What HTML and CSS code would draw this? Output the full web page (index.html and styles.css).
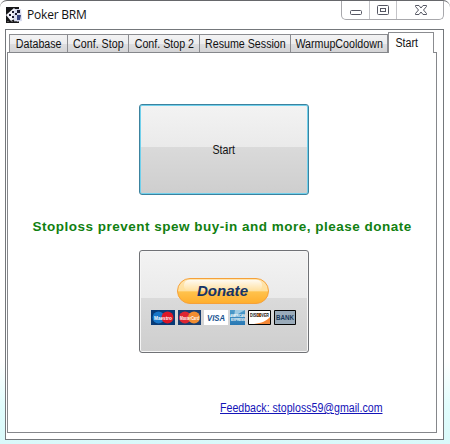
FILE: index.html
```html
<!DOCTYPE html>
<html lang="en">
<head>
<meta charset="utf-8">
<title>Poker BRM</title>
<link rel="stylesheet" href="styles.css">
</head>
<body>
<div class="window">
  <header class="titlebar">
    <svg class="app-icon" width="17" height="16" viewBox="0 0 17 16">
      <path fill="#171719" d="M0 0h13v16H0z"/>
      <path fill="#f2f2f8" d="M0 8 8 1l3 3-3 8-3 2z"/>
      <path fill="#d8dcef" d="M9 2h6l1 12-7 1-3-5z"/>
      <path fill="#1b1b32" d="M3 7h2v2H3zM6 4h2v2H6zM6 9h2v2H6zM9 6h2v2H9zM11 3h3v3h-3z"/>
      <path fill="#36427f" d="M11 8h4l-1 5h-3z"/>
      <path fill="#555" d="M1 14h2v1H1zM5 14h2v1H5zM9 14h2v1H9z"/>
    </svg>
    <h1 class="title">Poker BRM</h1>
    <div class="controls">
      <span class="control"><svg width="27" height="18"><rect x="8.500" y="9.500" width="11" height="4" rx="1" fill="#fff" stroke="#555763"/></svg></span>
      <span class="control"><svg width="26" height="18"><rect x="7.500" y="4.500" width="11" height="9" rx="1" fill="#fff" stroke="#555763"/><rect x="10.500" y="7.500" width="5" height="3" fill="#fff" stroke="#555763"/></svg></span>
      <span class="control"><svg width="46" height="18"><path d="M18.500 4.500h3.500l2 2.500 2-2.500h3.500v1l-3 3.500 3 3.500v1H26l-2-2.500-2 2.500h-3.500v-1l3-3.500-3-3.500z" fill="#fff" stroke="#555763"/></svg></span>
    </div>
  </header>
  <main class="client">
    <nav class="tabs">
      <span class="tab tab-database"><span class="label">Database</span></span>
      <span class="tab tab-stop"><span class="label">Conf. Stop</span></span>
      <span class="tab tab-stop2"><span class="label">Conf. Stop 2</span></span>
      <span class="tab tab-resume"><span class="label">Resume Session</span></span>
      <span class="tab tab-warmup"><span class="label">WarmupCooldown</span></span>
      <span class="tab tab-start"><span class="label">Start</span></span>
    </nav>
    <section class="panel">
      <button class="button start"><span class="label">Start</span></button>
      <p class="message">Stoploss prevent spew buy-in and more, please donate</p>
      <button class="button donate" aria-label="Donate">
        <svg width="148" height="50" viewBox="0 0 148 50">
          <defs>
            <linearGradient id="gold" x2="0" y2="1"><stop offset="0" stop-color="#ffe5b0"/><stop offset=".48" stop-color="#ffe09d"/><stop offset=".54" stop-color="#ffc24c"/><stop offset="1" stop-color="#ffae2c"/></linearGradient>
            <linearGradient id="shine" x2="0" y2="1"><stop offset="0" stop-color="#fffaf0"/><stop offset="1" stop-color="#ffdf9d"/></linearGradient>
            <linearGradient id="amex" x2="0" y2="1"><stop offset="0" stop-color="#4e9cca"/><stop offset="1" stop-color="#2878b4"/></linearGradient>
          </defs>
          <rect x="27.500" y=".5" width="91" height="25" rx="12.500" fill="url(#gold)" stroke="#f5a13a"/>
          <rect x="34" y="2" width="78" height="11" rx="5" fill="url(#shine)"/>
          <text class="donate-text" x="47" y="18" textLength="51" lengthAdjust="spacingAndGlyphs">Donate</text>
          <g>
            <path fill="#073a76" d="M1 32h24v15H1z"/>
            <circle cx="8.500" cy="39.500" r="6" fill="#1776c8"/><circle cx="17.500" cy="39.500" r="6" fill="#dc1726"/>
            <text class="card-text" x="4" y="42" textLength="18" lengthAdjust="spacingAndGlyphs">Maestro</text>
          </g>
          <g>
            <path fill="#183e70" d="M28 32h23v15H28z"/>
            <circle cx="35" cy="39.500" r="6" fill="#de2632"/><circle cx="44" cy="39.500" r="6" fill="#f08d31"/>
            <text class="card-text" x="30" y="42" textLength="19" lengthAdjust="spacingAndGlyphs">MasterCard</text>
          </g>
          <path fill="#fff" d="M54 32h24v15H54z"/>
          <text class="visa-text" x="57" y="43" textLength="18" lengthAdjust="spacingAndGlyphs">VISA</text>
          <path fill="url(#amex)" d="M80 32h15v15H80z"/>
          <path fill="#9dcae2" d="M85 32h10l-7 4-4 3z"/>
          <text class="amex-text" x="80" y="39" textLength="15" lengthAdjust="spacingAndGlyphs">AMERICAN</text>
          <text class="amex-text" x="81" y="43" textLength="14" lengthAdjust="spacingAndGlyphs">EXPRESS</text>
          <path fill="#fff" stroke="#050505" d="M98.500 32.500h22v14h-22z"/>
          <path fill="#f48735" d="M120 39v7h-16c8-1 12-3 16-7z"/><circle cx="109" cy="37" r="2" fill="#f48735"/>
          <text class="discover-text" x="100" y="39" textLength="19" lengthAdjust="spacingAndGlyphs">DISCOVER</text>
          <path fill="#9aabba" stroke="#050505" d="M124.500 32.500h21v14h-21z"/>
          <text class="bank-text" x="126" y="42" textLength="18" lengthAdjust="spacingAndGlyphs">BANK</text>
        </svg>
      </button>
      <a class="feedback" href="mailto:stoploss59@gmail.com">Feedback: stoploss59@gmail.com</a>
    </section>
  </main>
</div>
</body>
</html>
```
FILE: styles.css
```css
* { box-sizing: border-box; }
body { margin: 0; background: #fff; }
.window {
  width: 450px;
  height: 444px;
  padding: 0 6px 4px 5px;
  border-top: 1px solid #66676b;
  border-radius: 7px 7px 0 0;
  background: linear-gradient(#fff 0, #fff 360px, #e1fdfd 405px, #d9f9fa 100%);
  font: 12px "Liberation Sans", Arial, sans-serif;
  color: #111;
  overflow: hidden;
}
.titlebar { display: flex; height: 28px; }
.app-icon { margin: 6px 0 0 1px; }
.title {
  margin: 5px 0 0 4px;
  font: 12px/17px "Open Sans", "Noto Sans", sans-serif;
  letter-spacing: -.2px;
  color: #111;
}
.controls {
  display: flex;
  width: 103px;
  height: 19px;
  margin: 0 0 0 auto;
  border: 1px solid #a8a8ac;
  border-top: 0;
  border-radius: 0 0 5px 5px;
}
.control { display: block; height: 18px; }
.control + .control { border-left: 1px solid #c4c4c8; }
.control svg { display: block; }
.client {
  width: 439px;
  height: 411px;
  padding: 2px 6px 6px 1px;
  border: 1px solid #74777b;
  background: #fff;
}
.tabs { display: flex; align-items: flex-end; height: 20px; padding-left: 2px; }
.tab {
  display: flex;
  justify-content: center;
  align-items: center;
  flex: none;
  height: 18px;
  border: 1px solid #8b8c90;
  border-left-width: 0;
  border-bottom: 0;
  background: linear-gradient(#f3f3f3 0, #ececee 50%, #dedee0 51%, #d4d4d6);
}
.label { display: inline-block; white-space: nowrap; transform: scaleX(.89); }
.tab-database { width: 59px; border-left-width: 1px; }
.tab-stop { width: 61px; }
.tab-stop2 { width: 71px; }
.tab-resume { width: 91px; }
.tab-warmup { width: 97px; }
.tab-start {
  position: relative;
  width: 46px;
  height: 21px;
  margin-bottom: -1px;
  padding: 0 9px 1px 0;
  border-left-width: 1px;
  background: #fff;
}
.panel {
  display: flex;
  flex-direction: column;
  align-items: center;
  width: 430px;
  height: 381px;
  padding: 51px 0 0 4px;
  border: 1px solid #85878b;
  background: #fff;
}
.button {
  display: flex;
  justify-content: center;
  align-items: center;
  flex: none;
  width: 170px;
  margin: 0;
  padding: 0;
  border: 1px solid #707276;
  border-radius: 3px;
  background: linear-gradient(#f3f3f3 0, #eaeaea 47%, #dadada 47%, #cecece 100%);
  font: inherit;
  color: #111;
}
.start { height: 91px; border-color: #3c829e; box-shadow: inset 0 0 0 1px #70d0ec; }
.message {
  width: 379px;
  height: 17px;
  margin: 23px 0 0 -4px;
  font-size: 13.5px;
  line-height: 17px;
  font-weight: bold;
  letter-spacing: .5px;
  white-space: nowrap;
  color: #118011;
}
.donate { height: 103px; margin-top: 15px; box-shadow: inset 0 0 0 1px #f6f6f6; }
.donate svg { margin: 3px 0 0; flex: none; }
.donate-text { font: italic bold 15px "Liberation Sans", Arial, sans-serif; fill: #173467; }
.card-text { font: bold 5px "Liberation Sans", Arial, sans-serif; fill: #fff; }
.visa-text { font: italic bold 9px "Liberation Sans", Arial, sans-serif; fill: #17518f; }
.amex-text { font: bold 4px "Liberation Sans", Arial, sans-serif; fill: #fff; }
.discover-text { font: bold 5px "Liberation Sans", Arial, sans-serif; fill: #111; }
.bank-text { font: bold 7px "Liberation Sans", Arial, sans-serif; fill: #17385a; }
.feedback {
  align-self: flex-start;
  width: max-content;
  height: 15px;
  margin: 48px 0 0 208px;
  line-height: 15px;
  transform: scaleX(.885);
  transform-origin: left;
  white-space: nowrap;
  color: #1414b8;
}
```
